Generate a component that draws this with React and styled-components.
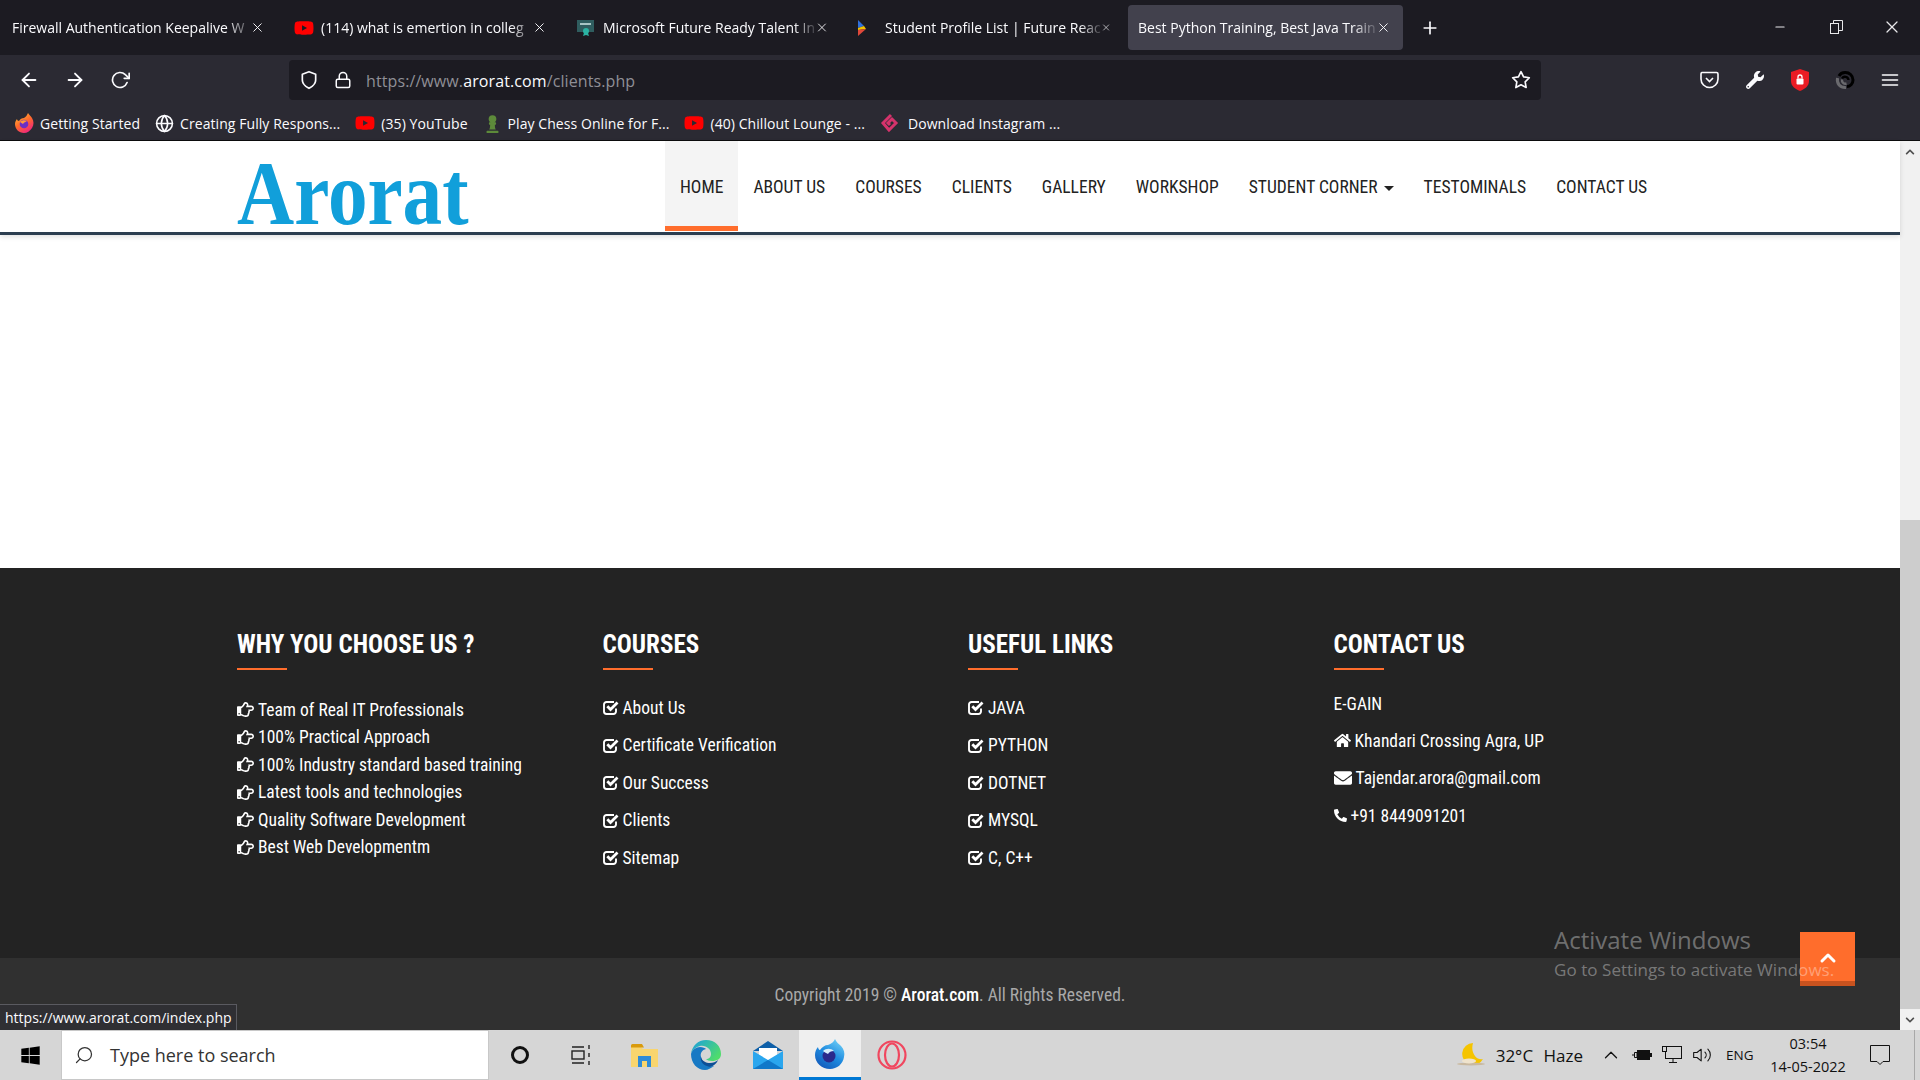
import React from 'react';
import styled, { createGlobalStyle } from 'styled-components';
import {
  FaRegHandPointRight,
  FaHome,
  FaEnvelope,
  FaPhoneAlt,
  FaChevronUp,
  FaChevronDown,
  FaWindows,
  FaYoutube,
  FaChessPawn,
  FaWrench,
} from 'react-icons/fa';
import {
  FiArrowLeft,
  FiArrowRight,
  FiRotateCw,
  FiShield,
  FiLock,
  FiStar,
  FiMenu,
  FiPlus,
  FiX,
  FiMinus,
  FiGlobe,
  FiSearch,
  FiVolume2,
  FiChevronUp,
} from 'react-icons/fi';

const GlobalStyle = createGlobalStyle`
  html, body {
    margin: 0;
    padding: 0;
    height: 100%;
    overflow: hidden;
    background: #fff;
  }
  * { box-sizing: border-box; }
`;

const Screen = styled.div`
  width: 1920px;
  height: 1080px;
  position: relative;
  display: flex;
  flex-direction: column;
  overflow: hidden;
  font-family: 'Open Sans', sans-serif;
`;

/* ---- browser chrome ---- */
const TabBar = styled.div`
  height: 55px;
  background: #1c1b22;
  display: flex;
  align-items: flex-start;
  padding-top: 5px;
  flex-shrink: 0;
`;

const Tab = styled.div`
  width: ${(p) => (p.$active ? 275 : 282)}px;
  height: 45px;
  padding: 0 ${(p) => (p.$active ? 12 : 17)}px 0 ${(p) => (p.$active ? 10 : 12)}px;
  display: flex;
  align-items: center;
  border-radius: 4px;
  background: ${(p) => (p.$active ? '#42414d' : 'transparent')};
  color: #fbfbfe;
  font-size: 14px;
`;

const TabIcon = styled.span`
  display: flex;
  width: 27px;
  flex-shrink: 0;
`;

const TabTitle = styled.span`
  flex: 1;
  white-space: nowrap;
  -webkit-mask-image: linear-gradient(to right, #000 90%, rgba(0, 0, 0, 0.15));
  mask-image: linear-gradient(to right, #000 90%, rgba(0, 0, 0, 0.15));
`;

const ThinX = styled(FiX)`
  stroke-width: 1.5;
`;

const TabPlus = styled.div`
  width: 50px;
  height: 45px;
  margin-left: 2px;
  display: flex;
  align-items: center;
  justify-content: center;
  color: #fbfbfe;
  font-size: 20px;
`;

const WindowButtons = styled.div`
  margin-left: auto;
  display: flex;
  align-items: center;
  height: 44px;
  color: #e8e8ea;
`;

const WindowButton = styled.div`
  width: 56px;
  display: flex;
  justify-content: center;
  align-items: center;
`;

const RestoreIcon = () => (
  <svg width="13" height="14" viewBox="0 0 13 14" fill="none" stroke="currentColor" strokeWidth="1">
    <rect x="0.5" y="3.5" width="8" height="10" />
    <path d="M3.5 3.5V0.5H12.5V10.5H8.5" />
  </svg>
);

const Toolbar = styled.div`
  height: 50px;
  background: #2b2a33;
  display: flex;
  align-items: center;
  flex-shrink: 0;
`;

const NavButtons = styled.div`
  width: 289px;
  display: flex;
  align-items: center;
  padding-left: 18px;
  gap: 24px;
  color: #fbfbfe;
`;

const UrlBar = styled.div`
  width: 1252px;
  height: 40px;
  background: #1c1b22;
  border-radius: 4px;
  display: flex;
  align-items: center;
  padding: 0 10px;
  color: #fbfbfe;
`;

const UrlIcons = styled.div`
  display: flex;
  align-items: center;
  gap: 15px;
  width: 67px;
`;

const UrlText = styled.div`
  flex: 1;
  padding-top: 2px;
  font-size: 16px;
  letter-spacing: 0.1px;
  color: #8f8f96;
  b {
    font-weight: 400;
    color: #fbfbfe;
  }
`;

const ToolIcons = styled.div`
  flex: 1;
  display: flex;
  align-items: center;
  justify-content: flex-end;
  padding-right: 8px;
  color: #fbfbfe;
`;

const ToolSlot = styled.div`
  width: 45px;
  display: flex;
  justify-content: center;
  align-items: center;
`;

const PocketIcon = () => (
  <svg width="19" height="18" viewBox="0 0 19 18" fill="none" stroke="#fbfbfe" strokeWidth="1.6">
    <path d="M2.5 1.5h14a1.5 1.5 0 0 1 1.5 1.5v5a8.5 8.5 0 0 1-17 0V3a1.5 1.5 0 0 1 1-1.5z" />
    <path d="M6 7l3.5 3.5L13 7" />
  </svg>
);

const ShieldLock = () => (
  <svg width="20" height="22" viewBox="0 0 20 22">
    <path d="M10 0l9 3v9c0 5-4 8-9 10-5-2-9-5-9-10V3z" fill="#ea1c24" />
    <rect x="6.5" y="9.5" width="7" height="6" rx="1" fill="#fff" />
    <path d="M8 9.5V8a2 2 0 0 1 4 0v1.5" fill="none" stroke="#fff" strokeWidth="1.3" />
  </svg>
);

const SwirlIcon = () => (
  <svg width="22" height="22" viewBox="0 0 22 22" fill="none" strokeWidth="3">
    <path d="M11 3.5a7.5 7.5 0 0 1 8 7.5c0 4-3 6.5-6 6.5" stroke="#000" />
    <path d="M11 3.5C8 3.5 6 5 5 7" stroke="#000" />
    <path d="M14.5 11a3.5 3.5 0 0 0-6.5-1.5" stroke="#000" strokeWidth="2.4" />
    <path d="M3.5 9c-1 5.5 2.5 10 8.5 9.5" stroke="#6a6a6e" />
    <path d="M8 10.5a3.5 3.5 0 0 0 4.5 4" stroke="#6a6a6e" strokeWidth="2.4" />
  </svg>
);

const BookmarksBar = styled.div`
  height: 36px;
  background: #2b2a33;
  display: flex;
  align-items: flex-start;
  padding: 6px 0 0 15px;
  gap: 15px;
  flex-shrink: 0;
  border-bottom: 1px solid #0c0c0d;
`;

const Bookmark = styled.div`
  display: flex;
  align-items: center;
  gap: 6px;
  height: 24px;
  color: #fbfbfe;
  font-size: 14px;
  letter-spacing: 0.07px;
  white-space: nowrap;
  svg {
    flex-shrink: 0;
  }
`;

const FoxIcon = () => (
  <svg width="19" height="20" viewBox="0 0 19 20">
    <defs>
      <linearGradient id="fox" x1="0" y1="0" x2="0.6" y2="1">
        <stop offset="0" stopColor="#ffc83d" />
        <stop offset="0.55" stopColor="#ff6a2b" />
        <stop offset="1" stopColor="#f0287a" />
      </linearGradient>
    </defs>
    <path d="M13 0c1 2 3 3 4 5 2 3 2 7 0 10-2 3-5 5-8 5-5 0-9-4-9-9 0-2 1-4 2-5 0 1 1 2 2 2 1-2 3-3 5-3 2-1 3-3 4-5z" fill="url(#fox)" />
    <circle cx="9" cy="11" r="4.3" fill="#6b2fc4" />
    <path d="M5 9c2-2 5-2 7-1-1 1-3 1-4 3-1-1-2-1-3-2z" fill="#ff9a3c" />
  </svg>
);

const InstaIcon = () => (
  <svg width="22" height="20" viewBox="0 0 22 20" fill="none" stroke="#d6336c" strokeWidth="3">
    <path d="M11 2L3 10l6 7 7-7-4-4-4 4 2 2" />
  </svg>
);

/* ---- page ---- */
const Page = styled.div`
  flex: 1;
  min-height: 0;
  display: flex;
`;

const Content = styled.div`
  flex: 1;
  min-width: 0;
  display: flex;
  flex-direction: column;
  font-family: 'Roboto Condensed', 'Liberation Sans Narrow', Roboto, sans-serif;
`;

const Header = styled.header`
  height: 94px;
  background: #fff;
  border-bottom: 3px solid #2c3e50;
  box-shadow: 0 2px 5px rgba(0, 0, 0, 0.12);
  display: flex;
  padding-left: 237px;
  position: relative;
  flex-shrink: 0;
`;

const LogoBox = styled.div`
  width: 428px;
  padding-top: 18px;
`;

const Logo = styled.div`
  font-family: 'Liberation Serif', serif;
  font-weight: 700;
  font-size: 91px;
  line-height: 70px;
  color: #119fda;
  transform: scaleX(0.87);
  transform-origin: left;
  white-space: nowrap;
`;

const Menu = styled.nav`
  display: flex;
  height: 90px;
`;

const MenuItem = styled.a`
  height: 90px;
  padding: 7px 15px 0;
  display: flex;
  align-items: center;
  gap: 6px;
  font-size: 17.55px;
  color: #222;
  background: ${(p) => (p.$active ? '#f4f4f4' : 'transparent')};
  border-bottom: 5px solid ${(p) => (p.$active ? '#ff6d2c' : 'transparent')};
  white-space: nowrap;
`;

const Caret = styled.span`
  width: 0;
  height: 0;
  border-left: 5px solid transparent;
  border-right: 5px solid transparent;
  border-top: 5px solid #222;
  margin-top: 2px;
`;

const Spacer = styled.div`
  flex: 1;
  background: #fff;
`;

const Footer = styled.footer`
  height: 390px;
  background: #232323;
  display: grid;
  grid-template-columns: repeat(4, 365.5px);
  padding: 62px 0 0 237px;
  flex-shrink: 0;
`;

const Col = styled.div`
  display: flex;
  flex-direction: column;
`;

const ColTitle = styled.h3`
  margin: 0;
  color: #fff;
  font-size: 25px;
  line-height: 30px;
  font-weight: 700;
  text-transform: uppercase;
  white-space: nowrap;
`;

const TitleRule = styled.div`
  width: 50px;
  height: 2px;
  margin-top: 8px;
  background: #ff6d2c;
`;

const Why = styled.ul`
  list-style: none;
  margin: 26px 0 0;
  padding: 0;
  display: flex;
  flex-direction: column;
`;

const WhyItem = styled.li`
  height: 27.5px;
  display: flex;
  align-items: center;
  gap: 4px;
  color: #fff;
  font-size: 17.5px;
  white-space: nowrap;
`;

const LinkList = styled.ul`
  list-style: none;
  margin: 19px 0 0;
  padding: 0;
  display: flex;
  flex-direction: column;
`;

const LinkItem = styled.li`
  height: 37.5px;
  display: flex;
  align-items: center;
  gap: 4px;
  color: #fff;
  font-size: 17.5px;
  white-space: nowrap;
`;

const ContactFirst = styled.div`
  margin-top: 19px;
  height: 33px;
  padding-bottom: 3px;
  display: flex;
  align-items: center;
  color: #fff;
  font-size: 17.5px;
`;

const ContactRow = styled.div`
  height: 37.5px;
  display: flex;
  align-items: center;
  gap: 4px;
  color: #fff;
  font-size: 17.5px;
  white-space: nowrap;
`;

const CopyBar = styled.div`
  height: 72px;
  flex-shrink: 0;
  padding-top: 2px;
  background: #303030;
  display: flex;
  align-items: center;
  justify-content: center;
  color: #a9a9a9;
  font-size: 17.5px;
  b {
    font-weight: 500;
    color: #fff;
  }
`;

const Scrollbar = styled.div`
  width: 20px;
  background: #f1f1f1;
  display: flex;
  flex-direction: column;
  flex-shrink: 0;
`;

const ScrollArrow = styled.div`
  height: 21px;
  display: flex;
  align-items: center;
  justify-content: center;
  font-size: 10px;
  color: #505050;
  background: #f1f1f1;
`;

const ScrollTrack = styled.div`
  flex: 1;
  display: flex;
  flex-direction: column;
`;

const ScrollGap = styled.div`
  height: 358px;
  background: #f1f1f1;
`;

const ScrollThumb = styled.div`
  flex: 1;
  background: #cdcdcd;
`;

const ToTop = styled.div`
  position: absolute;
  left: 1800px;
  top: 932px;
  width: 55px;
  height: 54px;
  padding-top: 3px;
  background: #ff6d2c;
  border-bottom: 5px solid #c9531f;
  color: #fff;
  display: flex;
  align-items: center;
  justify-content: center;
`;

const Watermark = styled.div`
  position: absolute;
  left: 1554px;
  top: 924px;
  color: rgba(255, 255, 255, 0.36);
  font-family: 'Open Sans', sans-serif;
  pointer-events: none;
  white-space: nowrap;
`;

const WatermarkTitle = styled.div`
  font-size: 24px;
  line-height: 32px;
`;

const WatermarkSub = styled.div`
  font-size: 17px;
  line-height: 28px;
  letter-spacing: 0.05px;
`;

const StatusTip = styled.div`
  position: absolute;
  left: 0;
  top: 1004px;
  width: 237px;
  height: 26px;
  background: #2f2f33;
  border: 1px solid #5a5a60;
  border-left: 0;
  border-bottom: 0;
  color: #fbfbfe;
  font-size: 14px;
  line-height: 25px;
  padding-left: 5px;
  white-space: nowrap;
`;

/* ---- taskbar ---- */
const Taskbar = styled.div`
  height: 50px;
  background: #d6d6d6;
  display: flex;
  align-items: stretch;
  flex-shrink: 0;
`;

const StartButton = styled.div`
  width: 61px;
  display: flex;
  align-items: center;
  justify-content: center;
  font-size: 21px;
  color: #000;
`;

const SearchBox = styled.div`
  width: 428px;
  background: #fff;
  border: 1px solid #c8c8c8;
  display: flex;
  align-items: center;
  gap: 16px;
  padding-left: 12px;
  font-size: 18px;
  color: #333;
`;

const MirrorSearch = styled(FiSearch)`
  transform: scaleX(-1);
  stroke-width: 1.5;
`;

const TaskIcons = styled.div`
  display: flex;
`;

const TaskIcon = styled.div`
  width: 62px;
  display: flex;
  align-items: center;
  justify-content: center;
  background: ${(p) => (p.$active ? '#efefef' : 'transparent')};
  border-bottom: ${(p) => (p.$active ? '3px solid #0078d4' : '0')};
`;

const Tray = styled.div`
  margin-left: auto;
  display: flex;
  align-items: center;
  color: #111;
`;

const Weather = styled.div`
  display: flex;
  align-items: center;
  gap: 10px;
  font-size: 17px;
  margin-right: 17px;
  word-spacing: 6px;
`;

const TrayIcons = styled.div`
  display: flex;
  align-items: center;
  gap: 10px;
  margin-right: 14px;
`;

const ThinChevron = styled(FiChevronUp)`
  stroke-width: 1.4;
`;

const ThinVolume = styled(FiVolume2)`
  stroke-width: 1.3;
`;

const Lang = styled.div`
  font-size: 13.5px;
  width: 39px;
`;

const Clock = styled.div`
  width: 86px;
  text-align: center;
  font-size: 14.5px;
  line-height: 23px;
`;

const Notify = styled.div`
  width: 63px;
  padding-right: 6px;
  display: flex;
  justify-content: center;
  align-items: center;
`;

const DesktopEdge = styled.div`
  width: 6px;
  height: 50px;
  border-left: 1px solid #a8a8a8;
`;

const CheckSquareIcon = () => (
  <svg width="16" height="15" viewBox="0 0 16 15" fill="none" stroke="#fff">
    <path d="M13 8.5v3A2.5 2.5 0 0 1 10.5 14h-7A2.5 2.5 0 0 1 1 11.5v-7A2.5 2.5 0 0 1 3.5 2H11" strokeWidth="1.9" />
    <path d="M4.3 6.3l3.2 3.2 7-7" strokeWidth="2.8" />
  </svg>
);

const CertIcon = () => (
  <svg width="19" height="17" viewBox="0 0 19 17">
    <rect x="1" y="1" width="17" height="12" fill="#2f5d5f" />
    <rect x="4" y="4" width="11" height="2" fill="#a7c5c5" />
    <circle cx="10" cy="12" r="3" fill="#2bb3a3" />
    <path d="M8 14l-1 3 3-1 3 1-1-3z" fill="#2bb3a3" />
  </svg>
);

const PrismIcon = () => (
  <svg width="12" height="20" viewBox="0 0 12 20">
    <path d="M0 2l6 6-6 2z" fill="#2f6fdc" />
    <path d="M0 10l6-2 2 3-8 1z" fill="#f2c200" />
    <path d="M0 12l8-1-8 7z" fill="#e0483a" />
  </svg>
);

const FolderIcon = () => (
  <svg width="27" height="23" viewBox="0 0 27 23">
    <path d="M0 3h10l2 2h15v18H0z" fill="#f9d56e" />
    <path d="M0 1.5A1.5 1.5 0 0 1 1.5 0H11l2 3.5H0z" fill="#d99a0c" />
    <path d="M7 12h13v11h-4v-6h-5v6H7z" fill="#2f8bd8" />
  </svg>
);

const EdgeIcon = () => (
  <svg width="30" height="30" viewBox="0 0 30 30">
    <defs>
      <linearGradient id="edgeTop" x1="0" y1="0" x2="1" y2="0.6">
        <stop offset="0" stopColor="#1b9de2" />
        <stop offset="1" stopColor="#4fdc6c" />
      </linearGradient>
    </defs>
    <path d="M15 0c9 0 15 6 15 14 0 5-4 7-9 7-3 0-5-1-6-2 3 0 5-2 5-5 0-5-5-9-11-8C5 7 1 10 0 14 1 6 7 0 15 0z" fill="url(#edgeTop)" />
    <path d="M0 14c1-4 5-7 9-7 3 0 5 1 6 2-4 1-6 4-5 8 1 6 7 10 13 9-3 2-6 4-9 4C6 30 0 23 0 14z" fill="#1779c4" />
    <path d="M10 17c1 4 5 6 9 6 3 0 6-1 8-3-2 5-7 8-11 6-4-1-7-5-6-9z" fill="#0d4f96" />
  </svg>
);

const MailIcon = () => (
  <svg width="30" height="28" viewBox="0 0 30 28">
    <path d="M15 0l15 10H0z" fill="#0e5fa8" />
    <path d="M6 7h18v8l-9 5-9-5z" fill="#fff" />
    <path d="M0 10l15 9 15-9v18H0z" fill="#2aa6ee" />
    <path d="M0 28l15-9 15 9z" fill="#1078c9" />
  </svg>
);

const NightlyIcon = () => (
  <svg width="30" height="30" viewBox="0 0 30 30">
    <defs>
      <linearGradient id="night" x1="0.8" y1="0" x2="0.2" y2="1">
        <stop offset="0" stopColor="#6fd0f7" />
        <stop offset="0.5" stopColor="#1f8ce0" />
        <stop offset="1" stopColor="#1257b8" />
      </linearGradient>
    </defs>
    <path d="M20 0c1 3 4 5 6 7 3 3 4 7 3 11-1 7-7 12-14 12C7 30 0 24 0 16c0-3 1-6 3-8 0 1 1 3 2 3 2-3 5-5 8-5 3-1 6-3 7-6z" fill="url(#night)" />
    <circle cx="14" cy="17" r="6.5" fill="#2a2a8c" />
    <path d="M8 12c3-3 8-3 11 0-3 0-5 1-6 3-2-1-4-2-5-3z" fill="#d7eefb" />
  </svg>
);

const BatteryIcon = () => (
  <svg width="20" height="14" viewBox="0 0 20 14" fill="none" stroke="#111">
    <rect x="5.5" y="2.5" width="12" height="9" fill="#111" />
    <rect x="18" y="5" width="2" height="4" fill="#111" stroke="none" />
    <path d="M0 7h3M2.5 4.5v5h2.5v-5z" />
  </svg>
);

const NotifyIcon = () => (
  <svg width="20" height="21" viewBox="0 0 20 21" fill="none" stroke="#111">
    <path d="M0.5 0.5h19v16h-6.5l-3 3-3-3H0.5z" />
  </svg>
);

const tabs = [
  { title: 'Firewall Authentication Keepalive W' },
  { title: '(114) what is emertion in colleg', icon: <FaYoutube color="#f00" size={20} /> },
  { title: 'Microsoft Future Ready Talent In', icon: <CertIcon /> },
  { title: 'Student Profile List | Future Reac', icon: <PrismIcon /> },
];

const why = [
  'Team of Real IT Professionals',
  '100% Practical Approach',
  '100% Industry standard based training',
  'Latest tools and technologies',
  'Quality Software Development',
  'Best Web Developmentm',
];

const courses = ['About Us', 'Certificate Verification', 'Our Success', 'Clients', 'Sitemap'];
const useful = ['JAVA', 'PYTHON', 'DOTNET', 'MYSQL', 'C, C++'];
const menu = ['ABOUT US', 'COURSES', 'CLIENTS', 'GALLERY', 'WORKSHOP'];

function App() {
  return (
    <Screen>
      <GlobalStyle />
      <TabBar>
        {tabs.map((t) => (
          <Tab key={t.title}>
            {t.icon && <TabIcon>{t.icon}</TabIcon>}
            <TabTitle>{t.title}</TabTitle>
            <ThinX size={15} />
          </Tab>
        ))}
        <Tab $active>
          <TabTitle>Best Python Training, Best Java Train</TabTitle>
          <ThinX size={15} />
        </Tab>
        <TabPlus>
          <FiPlus />
        </TabPlus>
        <WindowButtons>
          <WindowButton><FiMinus size={14} /></WindowButton>
          <WindowButton><RestoreIcon /></WindowButton>
          <WindowButton><ThinX size={20} /></WindowButton>
        </WindowButtons>
      </TabBar>

      <Toolbar>
        <NavButtons>
          <FiArrowLeft size={22} />
          <FiArrowRight size={22} />
          <FiRotateCw size={20} />
        </NavButtons>
        <UrlBar>
          <UrlIcons>
            <FiShield size={20} />
            <FiLock size={18} />
          </UrlIcons>
          <UrlText>
            https://www.<b>arorat.com</b>/clients.php
          </UrlText>
          <FiStar size={20} />
        </UrlBar>
        <ToolIcons>
          <ToolSlot><PocketIcon /></ToolSlot>
          <ToolSlot><FaWrench size={18} /></ToolSlot>
          <ToolSlot><ShieldLock /></ToolSlot>
          <ToolSlot><SwirlIcon /></ToolSlot>
          <ToolSlot><FiMenu size={20} /></ToolSlot>
        </ToolIcons>
      </Toolbar>

      <BookmarksBar>
        <Bookmark><FoxIcon />Getting Started</Bookmark>
        <Bookmark><FiGlobe size={19} />Creating Fully Respons...</Bookmark>
        <Bookmark><FaYoutube color="#f00" size={20} />(35) YouTube</Bookmark>
        <Bookmark><FaChessPawn color="#5d8a3a" size={19} />Play Chess Online for F...</Bookmark>
        <Bookmark><FaYoutube color="#f00" size={20} />(40) Chillout Lounge - ...</Bookmark>
        <Bookmark><InstaIcon />Download Instagram ...</Bookmark>
      </BookmarksBar>

      <Page>
        <Content>
          <Header>
            <LogoBox>
              <Logo>Arorat</Logo>
            </LogoBox>
            <Menu>
              <MenuItem $active>HOME</MenuItem>
              {menu.map((m) => (
                <MenuItem key={m}>{m}</MenuItem>
              ))}
              <MenuItem>
                STUDENT CORNER <Caret />
              </MenuItem>
              <MenuItem>TESTOMINALS</MenuItem>
              <MenuItem>CONTACT US</MenuItem>
            </Menu>
          </Header>
          <Spacer />
          <Footer>
            <Col>
              <ColTitle>Why You Choose Us ?</ColTitle>
              <TitleRule />
              <Why>
                {why.map((w) => (
                  <WhyItem key={w}>
                    <FaRegHandPointRight size={17} />
                    {w}
                  </WhyItem>
                ))}
              </Why>
            </Col>
            <Col>
              <ColTitle>Courses</ColTitle>
              <TitleRule />
              <LinkList>
                {courses.map((c) => (
                  <LinkItem key={c}>
                    <CheckSquareIcon />
                    {c}
                  </LinkItem>
                ))}
              </LinkList>
            </Col>
            <Col>
              <ColTitle>Useful Links</ColTitle>
              <TitleRule />
              <LinkList>
                {useful.map((c) => (
                  <LinkItem key={c}>
                    <CheckSquareIcon />
                    {c}
                  </LinkItem>
                ))}
              </LinkList>
            </Col>
            <Col>
              <ColTitle>Contact Us</ColTitle>
              <TitleRule />
              <ContactFirst>E-GAIN</ContactFirst>
              <ContactRow><FaHome size={17} />Khandari Crossing Agra, UP</ContactRow>
              <ContactRow><FaEnvelope size={18} />Tajendar.arora@gmail.com</ContactRow>
              <ContactRow><FaPhoneAlt size={13} />+91 8449091201</ContactRow>
            </Col>
          </Footer>
          <CopyBar>
            <span>
              Copyright 2019 © <b>Arorat.com</b>. All Rights Reserved.
            </span>
          </CopyBar>
        </Content>
        <Scrollbar>
          <ScrollArrow><FaChevronUp /></ScrollArrow>
          <ScrollTrack>
            <ScrollGap />
            <ScrollThumb />
          </ScrollTrack>
          <ScrollArrow><FaChevronDown /></ScrollArrow>
        </Scrollbar>
      </Page>

      <Taskbar>
        <StartButton><FaWindows /></StartButton>
        <SearchBox>
          <MirrorSearch size={20} />
          Type here to search
        </SearchBox>
        <TaskIcons>
          <TaskIcon>
            <svg width="20" height="20" viewBox="0 0 20 20" fill="none" stroke="#111" strokeWidth="3">
              <circle cx="10" cy="10" r="7.5" />
            </svg>
          </TaskIcon>
          <TaskIcon>
            <svg width="22" height="22" viewBox="0 0 22 22" fill="none" stroke="#222" strokeWidth="1.4">
              <rect x="1" y="7" width="12" height="8" />
              <path d="M1 3h12M1 19h12M18 1v4M18 9v4M18 17v4" />
            </svg>
          </TaskIcon>
          <TaskIcon><FolderIcon /></TaskIcon>
          <TaskIcon><EdgeIcon /></TaskIcon>
          <TaskIcon><MailIcon /></TaskIcon>
          <TaskIcon $active><NightlyIcon /></TaskIcon>
          <TaskIcon>
            <svg width="30" height="30" viewBox="0 0 30 30" fill="none" stroke="#f0475f" strokeWidth="2.2">
              <circle cx="15" cy="15" r="13.5" />
              <ellipse cx="15" cy="15" rx="7" ry="11.5" />
            </svg>
          </TaskIcon>
        </TaskIcons>
        <Tray>
          <Weather>
            <svg width="30" height="24" viewBox="0 0 30 24">
              <path d="M17 0a11 11 0 1 0 10 16c-6 2-13-6-10-16z" fill="#f5c400" />
              <ellipse cx="15" cy="21" rx="14" ry="1.5" fill="#c9b9a0" />
              <ellipse cx="13" cy="18" rx="7" ry="2.4" fill="#efe3cc" />
            </svg>
            32°C Haze
          </Weather>
          <TrayIcons>
            <ThinChevron size={22} />
            <BatteryIcon />
            <svg width="20" height="18" viewBox="0 0 20 18" fill="none" stroke="#111">
              <rect x="3.5" y="0.5" width="16" height="12" />
              <rect x="0.5" y="0.5" width="4" height="5" fill="#d6d6d6" />
              <path d="M11 12.5v4M7 16.5h8" />
            </svg>
            <ThinVolume size={20} />
          </TrayIcons>
          <Lang>ENG</Lang>
          <Clock>
            03:54
            <br />
            14-05-2022
          </Clock>
          <Notify><NotifyIcon /></Notify>
          <DesktopEdge />
        </Tray>
      </Taskbar>

      <ToTop><FiChevronUp size={24} strokeWidth={3} /></ToTop>
      <Watermark>
        <WatermarkTitle>Activate Windows</WatermarkTitle>
        <WatermarkSub>Go to Settings to activate Windows.</WatermarkSub>
      </Watermark>
      <StatusTip>https://www.arorat.com/index.php</StatusTip>
    </Screen>
  );
}

export default App;
